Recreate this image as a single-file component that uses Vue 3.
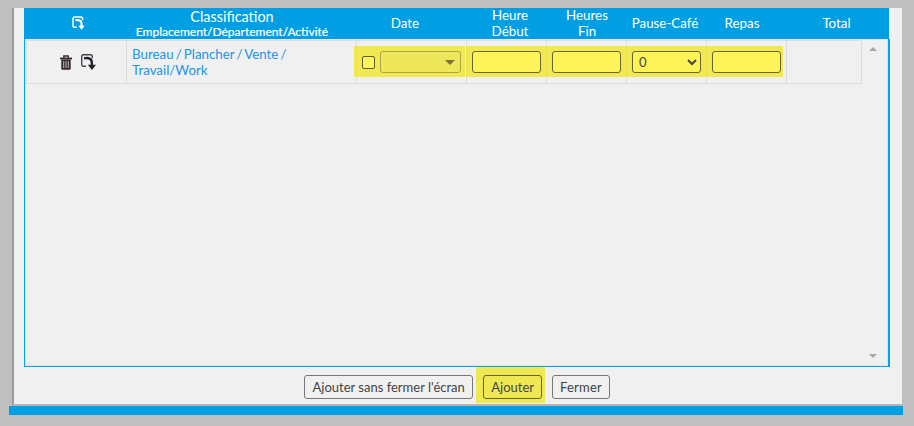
<script setup>
const heads = [
  { lines: ['Heure', 'Début'] },
  { lines: ['Heures', 'Fin'] },
  { lines: ['Pause-Café'] },
  { lines: ['Repas'] },
  { lines: ['Total'] }
]
</script>

<template>
  <div class="page">
    <div class="window">
      <div class="content">
        <div class="head">
          <div class="hcell">
            <svg class="ic-head" width="14" height="14" viewBox="0 0 14 14" fill="none">
              <path d="M5 11.300H2.500A1.500 1.500 0 0 1 1 9.800V2.500A1.500 1.500 0 0 1 2.500 1h6.300A1.800 1.800 0 0 1 10.600 2.800V4" stroke="#fff" stroke-width="1.500" />
              <path d="M3.500 4.200c3.500-.6 6 .4 6 3.300v3" stroke="#fff" stroke-width="2.200" />
              <path d="M6.300 9.800h6.400L9.500 13.800z" fill="#fff" />
            </svg>
          </div>
          <div class="hcell">
            <span class="h-main">Classification</span>
            <span class="h-sub">Emplacement/Département/Activité</span>
          </div>
          <div class="hcell">Date</div>
          <div v-for="h in heads" :key="h.lines[0]" class="hcell">
            <span v-for="l in h.lines" :key="l">{{ l }}</span>
          </div>
        </div>

        <div class="box">
          <div class="row">
            <div class="cell cell-actions">
              <svg width="12" height="15" viewBox="0 0 12 15" fill="none">
                <path d="M0 3.500h12" stroke="#2f2a30" stroke-width="1.800" />
                <path d="M3.800 3V1h4.400v2" stroke="#2f2a30" stroke-width="1.300" />
                <path d="M1.300 4.500h9.400v9a1.300 1.300 0 0 1-1.300 1.300H2.600a1.300 1.300 0 0 1-1.300-1.300z" fill="#2f2a30" />
                <path d="M3.700 6v7M6 6v7M8.300 6v7" stroke="#c9b8ac" stroke-width="1" />
              </svg>
              <svg width="15" height="16" viewBox="0 0 15 16" fill="none">
                <path d="M5 12.300H2.200A1.500 1.500 0 0 1 .7 10.800V2.200A1.500 1.500 0 0 1 2.200 .7h7.600A1.500 1.500 0 0 1 11.300 2.200v2" stroke="#45454f" stroke-width="1.400" />
                <path d="M3 4.400c4.500-1 7.800 .2 7.800 4v3.600" stroke="#222228" stroke-width="2.400" />
                <path d="M6.800 10.800H15L10.900 16z" fill="#222228" />
              </svg>
            </div>
            <div class="cell cell-class">
              <a class="link">Bureau / Plancher / Vente /<br />Travail/Work</a>
            </div>
            <div class="cell cell-date">
              <div class="date-mark">
                <input class="check" type="checkbox" />
                <div class="combo"><i class="tri"></i></div>
              </div>
            </div>
            <div class="cell cell-field">
              <span class="mark"><input class="field" type="text" /></span>
            </div>
            <div class="cell cell-field">
              <span class="mark"><input class="field" type="text" /></span>
            </div>
            <div class="cell cell-field">
              <span class="mark"><select class="field pick"><option>0</option></select></span>
            </div>
            <div class="cell cell-field">
              <span class="mark mark-end"><input class="field" type="text" /></span>
            </div>
            <div class="cell cell-last"></div>
          </div>
          <i class="scroll scroll-up"></i>
          <i class="scroll scroll-down"></i>
        </div>

        <div class="actions">
          <button class="btn btn-wide" type="button">Ajouter sans fermer l'écran</button>
          <span class="btn-mark"><button class="btn" type="button">Ajouter</button></span>
          <button class="btn btn-close" type="button">Fermer</button>
        </div>
      </div>
    </div>
    <div class="bar"></div>
  </div>
</template>

<style>
html, body { margin: 0; background: #bfbfbf; }
</style>

<style scoped>
.page {
  width: 914px;
  height: 426px;
  overflow: hidden;
  background: #bfbfbf;
  padding-top: 8px;
  box-sizing: border-box;
  font-family: Lato, "Liberation Sans", sans-serif;
  font-size: 13px;
}
.window {
  width: 890px;
  height: 398px;
  margin-left: 12px;
  box-sizing: border-box;
  border-left: 2px solid #9c9c9c;
  border-bottom: 2px solid #b4b4b4;
  background: #f0f0f0;
}
.content {
  margin-left: 10px;
  width: 865px;
}
.head {
  display: grid;
  grid-template-columns: 106px 204px 142px 68px 86px 70px 84px 105px;
  grid-template-rows: 31px;
  height: 31px;
  background: #009fe3;
  color: #fff;
  font-size: 13.33px;
  line-height: 16px;
}
.hcell {
  display: flex;
  flex-direction: column;
  align-items: center;
  justify-content: center;
  box-sizing: border-box;
  height: 31px;
  padding-bottom: 1px;
  white-space: nowrap;
}
.h-main { font-size: 14.4px; line-height: 17px; }
.h-sub { font-size: 12px; font-weight: 400; line-height: 14px; -webkit-text-stroke: 0.2px #fff; }
.ic-head { margin: -1px 0 0 3px; }
.box {
  position: relative;
  width: 866px;
  height: 328px;
  box-sizing: border-box;
  padding: 1px 1px 0;
  border-left: 1px solid #00a6ec;
  border-right: 2px solid #00a6ec;
  border-bottom: 1px solid #00a6ec;
  box-shadow: inset 1px 1px 0 #e4e4e4, inset -1px -1px 0 #e4e4e4;
}
.row {
  display: grid;
  grid-template-columns: 100px 230px 110px 80px 80px 80px 80px 76px;
  width: 836px;
  height: 44px;
  box-sizing: border-box;
  border-top: 1px solid #ddd;
  border-bottom: 1px solid #ddd;
}
.cell {
  display: flex;
  align-items: center;
  border-left: 1px solid #ddd;
  box-sizing: border-box;
}
.cell-last { border-right: 1px solid #ddd; }
.cell-actions { justify-content: center; gap: 9px; padding-left: 3px; }
.cell-class { padding-left: 5px; font-size: 13.33px; line-height: 16px; word-spacing: -1.3px; }
.link { color: #2094e4; }
.cell-date, .cell-field { align-items: flex-start; }
.date-mark, .mark {
  position: relative;
  z-index: 1;
  display: flex;
  margin-top: 5px;
  background: rgba(240, 229, 14, 0.7);
}
.date-mark {
  align-items: center;
  gap: 5px;
  margin-left: -3px;
  padding: 5px 4px 4px 8px;
}
.mark {
  margin-left: -1px;
  padding: 5px 5px 4px 6px;
}
.mark-end { padding-right: 2px; }
.check {
  appearance: none;
  width: 13px;
  height: 13px;
  margin: 0;
  border: 1px solid #5f5b2a;
  border-radius: 2px;
  background: #fff35a;
}
.combo {
  position: relative;
  width: 81px;
  height: 22px;
  box-sizing: border-box;
  border: 1px solid #aaa54a;
  border-radius: 3px;
  background: #eee75a;
}
.tri {
  position: absolute;
  right: 5px;
  top: 8px;
  border-style: solid;
  border-width: 5px 5px 0;
  border-color: #77733a transparent transparent;
}
.field {
  display: block;
  width: 69px;
  height: 22px;
  margin: 0;
  box-sizing: border-box;
  border: 1px solid #6b6630;
  border-radius: 3px;
  background: #fff35a;
  font-family: inherit;
  font-size: 13px;
  outline: none;
}
.pick { padding-left: 2px; color: #444; }
.scroll {
  position: absolute;
  left: 844px;
  border-style: solid;
  border-color: transparent;
}
.scroll-up { top: 8px; border-width: 0 4px 4px; border-bottom-color: #a6a6a6; }
.scroll-down { top: 315px; border-width: 4px 4px 0; border-top-color: #a6a6a6; }
.actions {
  display: flex;
  justify-content: center;
  gap: 10px;
  padding-top: 8px;
  margin-left: 1px;
}
.btn {
  height: 24px;
  padding: 0 7px;
  box-sizing: border-box;
  border: 1px solid #777;
  border-radius: 3px;
  background: #f0f0f0;
  color: #444;
  font-family: inherit;
  font-size: 13px;
  white-space: nowrap;
}
.btn-wide { padding: 0 7.5px; }
.btn-close { letter-spacing: 0.2px; }
.btn-mark {
  display: flex;
  margin: -8px -3px -4px -7px;
  padding: 8px 3px 4px 7px;
  background: #f0e852;
}
.btn-mark .btn { background: #f0e852; border-color: #66622c; }
.bar {
  width: 894px;
  height: 9px;
  margin-left: 9px;
  background: #009fe3;
}
</style>
